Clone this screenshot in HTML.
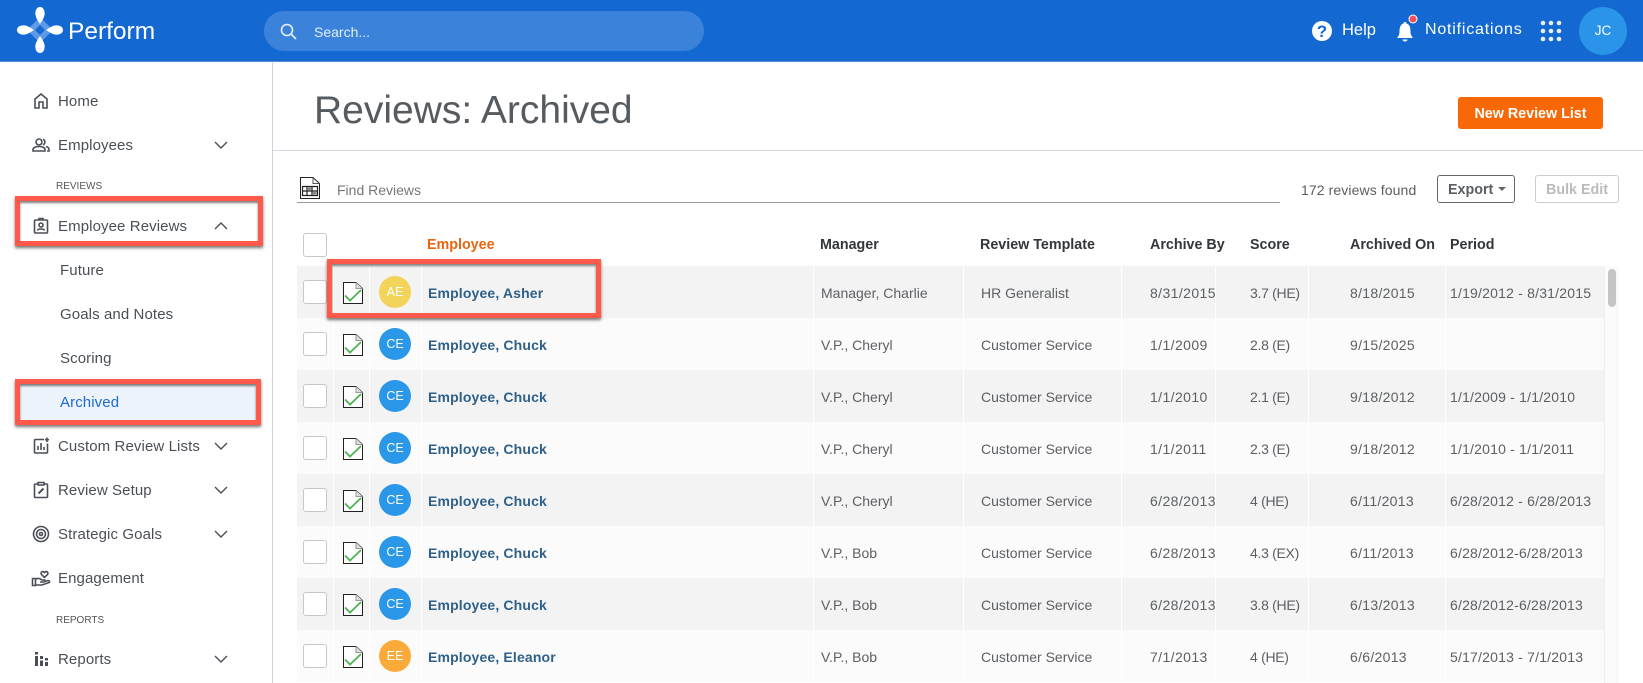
<!DOCTYPE html>
<html><head><meta charset="utf-8"><title>Reviews: Archived</title>
<style>
html,body{margin:0;padding:0;width:1643px;height:683px;overflow:hidden;background:#fff;font-family:"Liberation Sans",sans-serif;}
*{box-sizing:border-box}
.a,.a>*{position:absolute;white-space:nowrap}
#hd{left:0;top:0;width:1643px;height:62px;background:#1368d2;border-bottom:1px solid #5d8fcf;color:#fff}
#search{left:264px;top:11px;width:440px;height:40px;border-radius:20px;background:#3b83da}
.s{position:absolute;left:58px;font-size:15px;line-height:20px;margin-top:1px;color:#4a4f57;letter-spacing:.1px;white-space:nowrap}
.sub{left:60px}
.lb{position:absolute;left:56px;font-size:10px;line-height:14px;margin-top:1px;color:#555;white-space:nowrap}
.ic{position:absolute;left:31px;width:20px;height:20px;fill:none;stroke:#4a4f57;stroke-width:1.6}
.cv{position:absolute;left:213px;width:16px;height:10px;fill:none;stroke:#4a4f57;stroke-width:1.4}
.box{position:absolute;border:5px solid #ff594c;box-shadow:0 2px 3px rgba(0,0,0,.55),inset 0 2px 2px rgba(0,0,0,.5)}
.row{position:absolute;left:297px;width:1307px;height:52px;font-size:14px;line-height:52px;color:#5c6064}
.row span{position:absolute;top:1px;white-space:nowrap}
.g{background:#f3f3f3}.w{background:#fbfbfb}
.row i{position:absolute;top:0;width:1px;height:52px;background:#fff}
.row b{position:absolute;top:1px;left:131px;font-size:14px;color:#2f6088;letter-spacing:.15px;white-space:nowrap}
.cb{position:absolute;left:6px;top:14px;width:24px;height:24px;background:#fff;border:1px solid #c8c8c8;border-radius:3px}
.doc{position:absolute;left:46px;top:16px;width:20px;height:22px}
.av{position:absolute;left:82px;top:10px;width:32px;height:32px;border-radius:50%;color:#fff;font-size:12.5px;line-height:32px;text-align:center}
.c1{left:524px}.c2{left:684px}.c3{left:853px;letter-spacing:.4px}.c4{left:953px;letter-spacing:-.3px}.c5{left:1053px;letter-spacing:.3px}.c6{left:1153px;letter-spacing:.2px}
.th{position:absolute;top:236px;font-size:14.3px;line-height:18px;font-weight:bold;color:#33373b;white-space:nowrap}
</style></head>
<body>
<svg width="0" height="0" style="position:absolute"><defs>
<symbol id="d" viewBox="0 0 20 22"><path d="M.5.5H13L19.500 6.500V21.500H.5Z" fill="#fff" stroke="#222" stroke-width="1"/><path d="M13 .5V6.500H19.500" fill="#ddd" stroke="#999" stroke-width="1"/><path d="M2 13.500L7 18.500L18 8" fill="none" stroke="#4caf50" stroke-width="1.700"/></symbol>
<symbol id="c" viewBox="0 0 16 10"><path d="M2 2L8 8L14 2"/></symbol>
</defs></svg>

<div id="hd" class="a">
  <svg style="left:14px;top:4px" width="52" height="52" viewBox="0 0 52 52">
    <path d="M26 10Q29 23 42 26Q29 29 26 42Q23 29 10 26Q23 23 26 10Z" fill="#5d9be6"/>
    <path d="M26 13L39 26L26 39L13 26Z" fill="#5d9be6"/>
    <path d="M26 21L31 26L26 31L21 26Z" fill="#1368d2"/>
    <path d="M26 3C29.500 3 31 7 30.600 10.500C30.200 14 27.500 17.500 26 20C24.500 17.500 21.800 14 21.400 10.500C21 7 22.500 3 26 3ZM26 49C29.500 49 31 45 30.600 41.500C30.200 38 27.500 34.500 26 32C24.500 34.500 21.800 38 21.400 41.500C21 45 22.500 49 26 49ZM3 26C3 22.500 7 21 10.500 21.400C14 21.800 17.500 24.500 20 26C17.500 27.500 14 30.200 10.500 30.600C7 31 3 29.500 3 26ZM49 26C49 22.500 45 21 41.500 21.400C38 21.800 34.500 24.500 32 26C34.500 27.500 38 30.200 41.500 30.600C45 31 49 29.500 49 26Z" fill="#fff"/>
  </svg>
  <div style="left:68px;top:16px;font-size:24.5px;line-height:32px">Perform</div>
  <div id="search"></div>
  <svg style="left:280px;top:23px" width="17" height="17" viewBox="0 0 17 17" fill="none" stroke="#e6effa" stroke-width="1.600"><circle cx="7" cy="7" r="5.500"/><path d="M11 11L16 16"/></svg>
  <div style="left:314px;top:23px;font-size:14px;line-height:18px;color:#e3eefb">Search...</div>
  <svg style="left:1312px;top:21px" width="20" height="20" viewBox="0 0 20 20"><circle cx="10" cy="10" r="10" fill="#fff"/><text x="10" y="16" text-anchor="middle" font-family="Liberation Sans" font-weight="bold" font-size="17" fill="#1368d2">?</text></svg>
  <div style="left:1342px;top:20px;font-size:16.500px;line-height:20px">Help</div>
  <svg style="left:1396px;top:14px" width="26" height="30" viewBox="0 0 26 30"><path d="M9 8A1.500 1.500 0 0 1 10.500 9.500C14 10.500 14.500 14 14.500 18C14.500 21 16 22.500 17 24H1C2 22.500 3.500 21 3.500 18C3.500 14 4 10.500 7.500 9.500A1.500 1.500 0 0 1 9 8Z" fill="#fff"/><path d="M6.500 25.500h5a2.500 2 0 0 1-5 0Z" fill="#fff"/><circle cx="17" cy="5" r="4" fill="#f4505a" stroke="#fff" stroke-width="1"/></svg>
  <div style="left:1425px;top:20px;font-size:16px;line-height:20px;letter-spacing:.8px">Notifications</div>
  <svg style="left:1540px;top:20px" width="22" height="22" viewBox="0 0 22 22" fill="#fff" opacity=".9"><circle cx="3" cy="3" r="2.300"/><circle cx="11" cy="3" r="2.300"/><circle cx="19" cy="3" r="2.300"/><circle cx="3" cy="11" r="2.300"/><circle cx="11" cy="11" r="2.300"/><circle cx="19" cy="11" r="2.300"/><circle cx="3" cy="19" r="2.300"/><circle cx="11" cy="19" r="2.300"/><circle cx="19" cy="19" r="2.300"/></svg>
  <div style="left:1579px;top:7px;width:48px;height:48px;border-radius:50%;background:#2a94e8;text-align:center;line-height:48px;font-size:13.500px">JC</div>
</div>

<div style="position:absolute;left:272px;top:62px;width:1px;height:621px;background:#cdd4e0"></div>
<div style="position:absolute;left:273px;top:150px;width:1370px;height:1px;background:#d3d7de"></div>

<!-- Sidebar -->
<svg class="ic" style="top:91px" viewBox="0 0 20 20"><path d="M4 17V8L10 3L16 8V17H12V11H8V17Z"/></svg>
<div class="s" style="top:91px">Home</div>
<svg class="ic" style="top:135px" viewBox="0 0 20 20"><circle cx="8" cy="7" r="3"/><path d="M2 16V14.500C2 12.500 5 11.500 8 11.500S14 12.500 14 14.500V16Z"/><path d="M12 4.200A3 3 0 0 1 12 9.800M15 11.500C17 12 18 13 18 14.500V16H16"/></svg>
<div class="s" style="top:135px">Employees</div>
<svg class="cv" style="top:140px"><use href="#c"/></svg>
<div class="lb" style="top:179px">REVIEWS</div>

<div class="box" style="left:15px;top:196px;width:248px;height:50px"></div>
<svg class="ic" style="top:216px" viewBox="0 0 20 20"><rect x="3.500" y="4" width="13" height="13" rx="1"/><circle cx="10" cy="9" r="2"/><path d="M6.500 14.500C7 12.500 13 12.500 13.500 14.500M8 4V2.500H12V4"/></svg>
<div class="s" style="top:216px">Employee Reviews</div>
<svg class="cv" style="top:221px;transform:scaleY(-1)"><use href="#c"/></svg>
<div class="s sub" style="top:260px">Future</div>
<div class="s sub" style="top:304px">Goals and Notes</div>
<div class="s sub" style="top:348px">Scoring</div>

<div class="box" style="left:15px;top:379px;width:246px;height:46px;background:#edf3fa"></div>
<div class="s sub" style="top:392px;color:#1d6ad4">Archived</div>

<svg class="ic" style="top:436px" viewBox="0 0 20 20"><path d="M13 3.500H4.500A1 1 0 0 0 3.500 4.500V16A1 1 0 0 0 4.500 17H15.500A1 1 0 0 0 16.500 16V7.500"/><path d="M7 14V10M10 14V7M13 14V11M16 1.500V6M14 3.700H18"/></svg>
<div class="s" style="top:436px">Custom Review Lists</div>
<svg class="cv" style="top:441px"><use href="#c"/></svg>
<svg class="ic" style="top:480px" viewBox="0 0 20 20"><path d="M7 4H4.500A1 1 0 0 0 3.500 5V16.500A1 1 0 0 0 4.500 17.500H15.500A1 1 0 0 0 16.500 16.500V5A1 1 0 0 0 15.500 4H13M7 2.500H13V5H7Z"/><path d="M7.500 13.500L12.500 8.500" stroke-width="2"/></svg>
<div class="s" style="top:480px">Review Setup</div>
<svg class="cv" style="top:485px"><use href="#c"/></svg>
<svg class="ic" style="top:524px" viewBox="0 0 20 20"><circle cx="10" cy="10" r="7.500"/><circle cx="10" cy="10" r="4.500"/><circle cx="10" cy="10" r="1.500"/></svg>
<div class="s" style="top:524px">Strategic Goals</div>
<svg class="cv" style="top:529px"><use href="#c"/></svg>
<svg class="ic" style="top:568px" viewBox="0 0 20 20"><path d="M13.500 9.500L10.500 6.500C9 4.500 11.500 2.500 13.500 4.500C15.500 2.500 18 4.500 16.500 6.500Z"/><path d="M1.500 10.500H4.500V17.500H1.500ZM4.500 11.500C7 9.500 9 10.500 11 12H13.500C14.500 12.500 14 14 13 14H9M13.500 13.500L17 12.500C18.500 12.500 19 14 18 14.500L11 17H4.500"/></svg>
<div class="s" style="top:568px">Engagement</div>
<div class="lb" style="top:613px">REPORTS</div>
<svg class="ic" style="top:649px;fill:#4a4f57;stroke:none" viewBox="0 0 20 20"><path d="M4 3H7V5.500H4ZM4 7H7V17H4ZM9 7H12V10H9ZM9 11.500H12V17H9ZM14 9H17V11.500H14ZM14 13H17V17H14Z"/></svg>
<div class="s" style="top:649px">Reports</div>
<svg class="cv" style="top:654px"><use href="#c"/></svg>

<!-- Title bar -->
<div style="position:absolute;left:314px;top:87px;font-size:39px;line-height:48px;color:#565b60;white-space:nowrap">Reviews: Archived</div>
<div style="position:absolute;left:1458px;top:97px;width:145px;height:32px;background:#f96806;border-radius:3px;color:#fff;font-size:14.300px;font-weight:bold;line-height:34px;text-align:center">New Review List</div>

<!-- Toolbar -->
<svg style="position:absolute;left:300px;top:177px" width="20" height="22" viewBox="0 0 20 22"><path d="M.5.500H13L19.500 6.500V21.500H.5Z" fill="#fff" stroke="#222"/><path d="M13 .5V6.500H19.500" fill="none" stroke="#555"/><path d="M2.500 9.500H17.500V18.500H2.500ZM2.500 14H17.500M7 9.500V18.500M12 9.500V18.500" fill="none" stroke="#222" stroke-width="1.200"/><path d="M8 10.500H11V13H8ZM13 15H16.500V17.500H13Z" fill="#888"/></svg>
<div style="position:absolute;left:337px;top:181px;font-size:14px;line-height:18px;color:#777">Find Reviews</div>
<div style="position:absolute;left:297px;top:202px;width:983px;height:1px;background:#9a9a9a"></div>
<div style="position:absolute;left:1301px;top:181px;font-size:14px;line-height:18px;color:#5a5e62;white-space:nowrap;letter-spacing:.1px">172 reviews found</div>
<div style="position:absolute;left:1437px;top:175px;width:78px;height:28px;border:1px solid #666;border-radius:3px;font-size:14.300px;font-weight:bold;color:#5a5e62;line-height:29px;padding-left:10px">Export<span style="position:absolute;left:60px;top:11px;border:4px solid transparent;border-top-color:#666;border-bottom:0"></span></div>
<div style="position:absolute;left:1535px;top:175px;width:84px;height:28px;border:1px solid #ccc;border-radius:3px;font-size:14.300px;font-weight:bold;color:#bbb;line-height:29px;text-align:center">Bulk Edit</div>

<!-- Table head -->
<div class="cb" style="left:303px;top:233px"></div>
<div class="th" style="left:427px;color:#e8660f">Employee</div>
<div class="th" style="left:820px">Manager</div>
<div class="th" style="left:980px">Review Template</div>
<div class="th" style="left:1150px">Archive By</div>
<div class="th" style="left:1250px">Score</div>
<div class="th" style="left:1350px">Archived On</div>
<div class="th" style="left:1450px">Period</div>

<!-- Rows -->
<div class="row g" style="top:266px"><i style="left:36px"></i><i style="left:72px"></i><i style="left:124px"></i><i style="left:516px"></i><i style="left:666px"></i><i style="left:824px"></i><i style="left:918px"></i><i style="left:1011px"></i><i style="left:1148px"></i><div class="cb"></div><svg class="doc"><use href="#d"/></svg><div class="av" style="background:#f2d45a">AE</div><b>Employee, Asher</b><span class="c1">Manager, Charlie</span><span class="c2">HR Generalist</span><span class="c3">8/31/2015</span><span class="c4">3.7 (HE)</span><span class="c5">8/18/2015</span><span class="c6">1/19/2012 - 8/31/2015</span></div>
<div class="row w" style="top:318px"><i style="left:36px"></i><i style="left:72px"></i><i style="left:124px"></i><i style="left:516px"></i><i style="left:666px"></i><i style="left:824px"></i><i style="left:918px"></i><i style="left:1011px"></i><i style="left:1148px"></i><div class="cb"></div><svg class="doc"><use href="#d"/></svg><div class="av" style="background:#2a97e8">CE</div><b>Employee, Chuck</b><span class="c1">V.P., Cheryl</span><span class="c2">Customer Service</span><span class="c3">1/1/2009</span><span class="c4">2.8 (E)</span><span class="c5">9/15/2025</span></div>
<div class="row g" style="top:370px"><i style="left:36px"></i><i style="left:72px"></i><i style="left:124px"></i><i style="left:516px"></i><i style="left:666px"></i><i style="left:824px"></i><i style="left:918px"></i><i style="left:1011px"></i><i style="left:1148px"></i><div class="cb"></div><svg class="doc"><use href="#d"/></svg><div class="av" style="background:#2a97e8">CE</div><b>Employee, Chuck</b><span class="c1">V.P., Cheryl</span><span class="c2">Customer Service</span><span class="c3">1/1/2010</span><span class="c4">2.1 (E)</span><span class="c5">9/18/2012</span><span class="c6">1/1/2009 - 1/1/2010</span></div>
<div class="row w" style="top:422px"><i style="left:36px"></i><i style="left:72px"></i><i style="left:124px"></i><i style="left:516px"></i><i style="left:666px"></i><i style="left:824px"></i><i style="left:918px"></i><i style="left:1011px"></i><i style="left:1148px"></i><div class="cb"></div><svg class="doc"><use href="#d"/></svg><div class="av" style="background:#2a97e8">CE</div><b>Employee, Chuck</b><span class="c1">V.P., Cheryl</span><span class="c2">Customer Service</span><span class="c3">1/1/2011</span><span class="c4">2.3 (E)</span><span class="c5">9/18/2012</span><span class="c6">1/1/2010 - 1/1/2011</span></div>
<div class="row g" style="top:474px"><i style="left:36px"></i><i style="left:72px"></i><i style="left:124px"></i><i style="left:516px"></i><i style="left:666px"></i><i style="left:824px"></i><i style="left:918px"></i><i style="left:1011px"></i><i style="left:1148px"></i><div class="cb"></div><svg class="doc"><use href="#d"/></svg><div class="av" style="background:#2a97e8">CE</div><b>Employee, Chuck</b><span class="c1">V.P., Cheryl</span><span class="c2">Customer Service</span><span class="c3">6/28/2013</span><span class="c4">4 (HE)</span><span class="c5">6/11/2013</span><span class="c6">6/28/2012 - 6/28/2013</span></div>
<div class="row w" style="top:526px"><i style="left:36px"></i><i style="left:72px"></i><i style="left:124px"></i><i style="left:516px"></i><i style="left:666px"></i><i style="left:824px"></i><i style="left:918px"></i><i style="left:1011px"></i><i style="left:1148px"></i><div class="cb"></div><svg class="doc"><use href="#d"/></svg><div class="av" style="background:#2a97e8">CE</div><b>Employee, Chuck</b><span class="c1">V.P., Bob</span><span class="c2">Customer Service</span><span class="c3">6/28/2013</span><span class="c4">4.3 (EX)</span><span class="c5">6/11/2013</span><span class="c6">6/28/2012-6/28/2013</span></div>
<div class="row g" style="top:578px"><i style="left:36px"></i><i style="left:72px"></i><i style="left:124px"></i><i style="left:516px"></i><i style="left:666px"></i><i style="left:824px"></i><i style="left:918px"></i><i style="left:1011px"></i><i style="left:1148px"></i><div class="cb"></div><svg class="doc"><use href="#d"/></svg><div class="av" style="background:#2a97e8">CE</div><b>Employee, Chuck</b><span class="c1">V.P., Bob</span><span class="c2">Customer Service</span><span class="c3">6/28/2013</span><span class="c4">3.8 (HE)</span><span class="c5">6/13/2013</span><span class="c6">6/28/2012-6/28/2013</span></div>
<div class="row w" style="top:630px"><i style="left:36px"></i><i style="left:72px"></i><i style="left:124px"></i><i style="left:516px"></i><i style="left:666px"></i><i style="left:824px"></i><i style="left:918px"></i><i style="left:1011px"></i><i style="left:1148px"></i><div class="cb"></div><svg class="doc"><use href="#d"/></svg><div class="av" style="background:#fbaa3a">EE</div><b>Employee, Eleanor</b><span class="c1">V.P., Bob</span><span class="c2">Customer Service</span><span class="c3">7/1/2013</span><span class="c4">4 (HE)</span><span class="c5">6/6/2013</span><span class="c6">5/17/2013 - 7/1/2013</span></div>

<!-- Scrollbar -->
<div style="position:absolute;left:1604px;top:266px;width:14px;height:417px;background:#fbfbfb;border-left:1px solid #efefef;border-right:1px solid #f4f4f4"></div>
<div style="position:absolute;left:1608px;top:269px;width:8px;height:38px;background:#c4c4c4;border-radius:4px"></div>

<!-- Row highlight box -->
<div class="box" style="left:327px;top:259px;width:274px;height:59px"></div>
</body></html>
